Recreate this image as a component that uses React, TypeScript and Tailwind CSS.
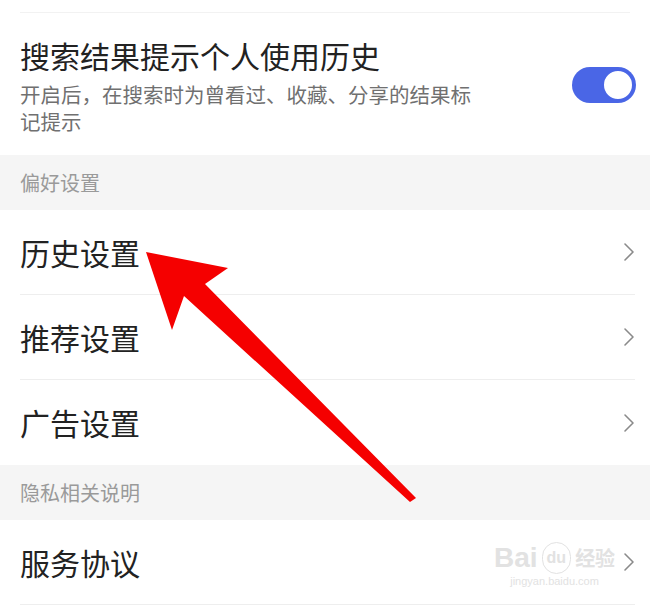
import { ChevronRight } from 'lucide-react'

const font = { fontFamily: '"Noto Sans CJK SC", "Noto Sans", sans-serif' }

function Toggle() {
  return (
    <div className="w-[64px] h-[36px] rounded-full bg-[#4a66e6] flex items-center justify-end pr-[2px]">
      <div className="w-[32px] h-[32px] rounded-full bg-white border-2 border-[#4a66e6]" />
    </div>
  )
}

function SectionHeader({ label }: { label: string }) {
  return (
    <div className="h-[55px] bg-[#f5f5f5] flex items-center px-5 text-[20px] text-[#9a9a9a]">
      {label}
    </div>
  )
}

function Row({ label, last }: { label: string; last?: boolean }) {
  return (
    <div className="h-[85px] bg-white pl-5 pr-[15px]">
      <div className={`h-full flex items-center justify-between ${last ? '' : 'border-b border-[#eeeeee]'}`}>
        <span className="text-[30px] text-[#222222]">{label}</span>
        <ChevronRight className="w-[32px] h-[32px] -mr-[10px] text-[#8a8a8a]" strokeWidth={1.2} />
      </div>
    </div>
  )
}

export default function App() {
  return (
    <div className="relative w-[650px] h-[612px] bg-white overflow-hidden" style={font}>
      <div className="h-[13px] mx-5 border-b border-[#f2f2f2]" />

      <div className="h-[142px] flex items-start justify-between pl-5 pr-[14px]">
        <div className="pt-[22px]">
          <div className="text-[30px] leading-[40px] text-[#222222]">搜索结果提示个人使用历史</div>
          <div className="mt-[6px] w-[462px] text-[20.5px] leading-[27px] text-[#707070]">
            开启后，在搜索时为曾看过、收藏、分享的结果标记提示
          </div>
        </div>
        <div className="pt-[54px]">
          <Toggle />
        </div>
      </div>

      <SectionHeader label="偏好设置" />
      <Row label="历史设置" />
      <Row label="推荐设置" />
      <Row label="广告设置" last />
      <SectionHeader label="隐私相关说明" />
      <div className="relative">
        <Row label="服务协议" />
        {/* watermark */}
        <div className="absolute left-[494px] top-[22px] flex flex-col items-center text-[#e2e2e2] pointer-events-none">
          <div className="flex items-center gap-1 text-[28px] leading-[30px] font-bold" style={{ fontFamily: '"Liberation Sans", sans-serif' }}>
            <span>Bai</span>
            <span className="text-[16px] border border-[#e2e2e2] rounded-full px-1">du</span>
            <span className="text-[20px]" style={font}>经验</span>
          </div>
          <div className="text-[11px] leading-[14px]" style={{ fontFamily: '"Liberation Sans", sans-serif' }}>jingyan.baidu.com</div>
        </div>
      </div>

      {/* red arrow overlay */}
      <svg className="absolute left-0 top-0 pointer-events-none" width="650" height="612" viewBox="0 0 650 612">
        <polygon
          points="146,252 228,268 205,284 416,498 410,502 184,296 172,330"
          fill="#f50000"
          strokeLinejoin="round"
        />
      </svg>
    </div>
  )
}
